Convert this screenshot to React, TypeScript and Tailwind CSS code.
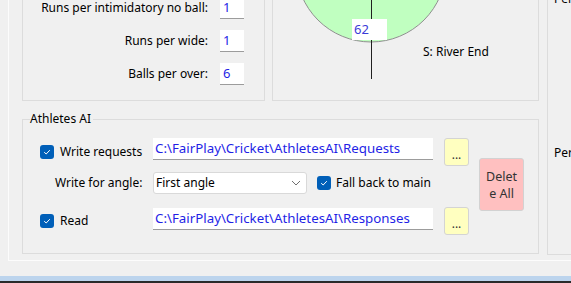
import React from 'react';

const Check: React.FC = () => (
  <span className="w-[14px] h-[14px] rounded-[3px] bg-[#005fb8] flex items-center justify-center shrink-0">
    <svg width="10" height="10" viewBox="0 0 10 10">
      <path d="M2.2 5.2 L4.2 7 L7.8 3.2" fill="none" stroke="white" strokeWidth="1" />
    </svg>
  </span>
);

const Field: React.FC<{ value: string; className?: string }> = ({ value, className = '' }) => (
  <div
    className={`h-[22px] bg-white border-b border-[#9c9c9c] flex items-center pl-[2px] text-[13.3px] text-[#1f1fe6] whitespace-nowrap overflow-hidden ${className}`}
  >
    {value}
  </div>
);

const DotsButton: React.FC = () => (
  <button className="ml-[11px] w-[25px] h-[28px] bg-[#ffffc0] border border-[#d4d4d4] rounded-[3px] flex items-end justify-center pb-[5px] leading-[10px] text-[#333]">
    ...
  </button>
);

const settings = [
  { label: 'Runs per intimidatory no ball:', value: '1' },
  { label: 'Runs per wide:', value: '1' },
  { label: 'Balls per over:', value: '6' },
];

const App: React.FC = () => {
  return (
    <div className="w-[571px] h-[283px] overflow-hidden bg-[#f0f0f0] flex flex-col text-[12px] text-black font-['Noto_Sans',sans-serif]">
      <div className="h-[261px] pl-[8px] flex shrink-0">
        <div className="flex-1 flex border-l border-b border-[#fcfcfc] pl-[13px]">
          {/* left column */}
          <div className="w-[517px] flex flex-col shrink-0">
            <div className="h-[101px] flex gap-[7px]">
              <div className="w-[243px] border-x border-b border-[#dcdcdc] flex flex-col justify-end gap-[11px] pb-[15px] pr-[20px]">
                {settings.map(s => (
                  <div key={s.label} className="flex justify-end items-center gap-[12px]">
                    <span className="whitespace-nowrap">{s.label}</span>
                    <div className="w-[24px] h-[22px] bg-white border-b border-[#9c9c9c] flex items-center pl-[3px] text-[13px] text-[#1f1fe6]">
                      {s.value}
                    </div>
                  </div>
                ))}
              </div>
              <div className="w-[267px] border-x border-b border-[#dcdcdc] relative">
                <svg className="absolute left-0 top-0" width="265" height="100">
                  <circle cx="98" cy="-33" r="75" fill="#c0ffc0" stroke="#909090" strokeWidth="1" />
                  <line x1="98.5" y1="0" x2="98.5" y2="79" stroke="#202020" strokeWidth="1" />
                </svg>
                <div className="absolute left-[79px] top-[19px] w-[35px] h-[21px] bg-white text-[#3b3bd8] text-[13px] leading-[21px] pl-[2px]">
                  62
                </div>
                <div className="absolute left-[150px] top-[43px] leading-[18px] whitespace-nowrap">S: River End</div>
              </div>
            </div>

            <div className="mt-[18px] h-[135px] border border-[#dcdcdc] relative pt-[18px] pl-[17px] flex items-start">
              <span className="absolute left-[7px] top-[-9px] leading-[16px] bg-[#f0f0f0] pr-[2px]">Athletes AI</span>
              <div className="w-[429px] flex flex-col">
                <div className="h-[28px] flex items-center">
                  <div className="w-[113px] flex items-center">
                    <Check />
                    <span className="ml-[6px]">Write requests</span>
                  </div>
                  <Field value="C:\FairPlay\Cricket\AthletesAI\Requests" className="w-[280px] self-start" />
                  <DotsButton />
                </div>
                <div className="mt-[6px] h-[22px] flex items-center">
                  <div className="w-[113px] pl-[15px] whitespace-nowrap">Write for angle:</div>
                  <div className="w-[154px] h-[22px] bg-white border border-[#d9d9d9] rounded-[3px] flex items-center justify-between pl-[2px] pr-[5px]">
                    <span>First angle</span>
                    <svg width="10" height="6" viewBox="0 0 10 6">
                      <path d="M1 1 L5 5 L9 1" fill="none" stroke="#707070" strokeWidth="1" />
                    </svg>
                  </div>
                  <div className="ml-[10px] flex items-center">
                    <Check />
                    <span className="ml-[5px] whitespace-nowrap">Fall back to main</span>
                  </div>
                </div>
                <div className="mt-[13px] h-[27px] flex items-center">
                  <div className="w-[113px] flex items-center">
                    <Check />
                    <span className="ml-[6px]">Read</span>
                  </div>
                  <Field value="C:\FairPlay\Cricket\AthletesAI\Responses" className="w-[280px] self-start mt-[1px]" />
                  <DotsButton />
                </div>
              </div>
              <button className="ml-[10px] mt-[20px] w-[45px] h-[53px] bg-[#ffc0c0] border border-[#d2d2d2] rounded-[3px] flex flex-col items-center justify-center leading-[17px] text-[12.5px] text-[#333]">
                <span>Delet</span>
                <span>e All</span>
              </button>
            </div>
          </div>

          {/* right panel */}
          <div className="ml-[8px] h-[255px] flex-1 border-l border-b border-[#dcdcdc] flex flex-col pl-[6px]">
            <span className="mt-[-9px] leading-[16px]">Per</span>
            <span className="mt-[138px] leading-[16px]">Per</span>
          </div>
        </div>
      </div>
      <div className="h-[15px] shrink-0" />
      <div className="h-[5px] bg-[#bcd4ed] shrink-0" />
      <div className="h-[2px] bg-[#2a2a2a] shrink-0" />
    </div>
  );
};

export default App;
